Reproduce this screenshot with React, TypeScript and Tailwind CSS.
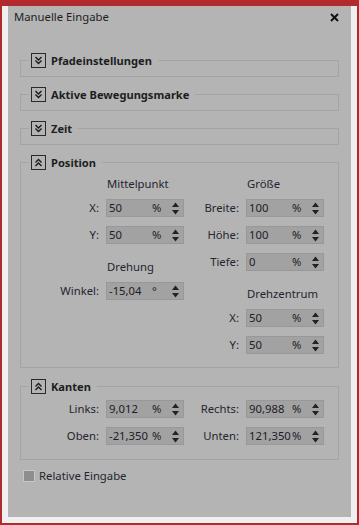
import React from "react"

const font = { fontFamily: '"Noto Sans", "Open Sans", sans-serif' }

function Toggle({ open }: { open: boolean }) {
  return (
    <span className="flex h-[15px] w-[15px] items-center justify-center border border-[#2a2a2a]">
      <svg width="9" height="9" viewBox="0 0 9 9" fill="none" stroke="#1a1a1a" strokeWidth="1.4">
        {open ? (
          <>
            <polyline points="1.5,4.5 4.5,1.5 7.5,4.5" />
            <polyline points="1.5,8 4.5,5 7.5,8" />
          </>
        ) : (
          <>
            <polyline points="1.5,1 4.5,4 7.5,1" />
            <polyline points="1.5,4.5 4.5,7.5 7.5,4.5" />
          </>
        )}
      </svg>
    </span>
  )
}

function Group({ title, open, className, children }: { title: string; open?: boolean; className?: string; children?: React.ReactNode }) {
  return (
    <fieldset className={`mx-[12px] border border-[#a4a4a4] pl-[8px] ${className ?? ""}`}>
      <legend className="pl-[2px] pr-[6px]">
        <span className="flex h-[15px] items-center gap-[5px]">
          <Toggle open={!!open} />
          <span className="text-[11.1px] font-bold leading-none text-[#1e1e1e]">{title}</span>
        </span>
      </legend>
      {children}
    </fieldset>
  )
}

function Spinner() {
  return (
    <svg width="7" height="13" viewBox="0 0 7 13" fill="#222">
      <polygon points="0,5 3.5,0.5 7,5" />
      <polygon points="0,8 7,8 3.5,12.5" />
    </svg>
  )
}

function Field({ label, value, unit, labelW }: { label: string; value: string; unit: string; labelW: string }) {
  return (
    <div className="flex h-[18px] items-center">
      <span className={`${labelW} pr-[7px] text-right text-[11.3px] text-[#25252f]`}>{label}</span>
      <div className="flex h-[18px] w-[78px] items-center border border-[#989898] bg-[#a2a2a2] text-[11.3px] text-[#1c1c28]">
        <span className="ml-[2px] w-[43px] whitespace-nowrap leading-[16px]">{value}</span>
        <span className="w-[20px] leading-[16px]">{unit}</span>
        <Spinner />
      </div>
    </div>
  )
}

function Heading({ text, className }: { text: string; className?: string }) {
  return <div className={`h-[18px] pl-[1px] text-[11.3px] leading-[18px] text-[#25252f] ${className ?? ""}`}>{text}</div>
}

export default function App() {
  return (
    <div className="h-[525px] w-[359px] bg-[#b22a2d] px-[2px] pb-[2px] pt-[6px]" style={font}>
      <div className="h-full bg-[#f0f0f0] px-[6px] pb-[6px]">
        <div className="flex h-full flex-col bg-[#b4b4b4]">
          {/* Title */}
          <div className="flex h-[22px] items-center justify-between pl-[6px] pr-[12px]">
            <span className="text-[11.3px] text-[#1e1e1e]">Manuelle Eingabe</span>
            <svg width="9" height="9" viewBox="0 0 9 9" stroke="#111" strokeWidth="2">
              <line x1="1" y1="1" x2="8" y2="8" />
              <line x1="8" y1="1" x2="1" y2="8" />
            </svg>
          </div>

          <Group title="Pfadeinstellungen" className="mt-[25px] pb-[8px]" />
          <Group title="Aktive Bewegungsmarke" className="mt-[10px] pb-[8px]" />
          <Group title="Zeit" className="mt-[10px] pb-[8px]" />

          <Group title="Position" open className="mt-[10px] pb-[13px] pt-[5px]">
            <div className="flex">
              <div className="flex flex-col">
                <div className="pl-[77px]"><Heading text="Mittelpunkt" /></div>
                <div className="mt-[6px] flex flex-col gap-[9px]">
                  <Field label="X:" value="50" unit="%" labelW="w-[77px]" />
                  <Field label="Y:" value="50" unit="%" labelW="w-[77px]" />
                </div>
                <div className="pl-[77px]"><Heading text="Drehung" className="mt-[14px]" /></div>
                <div className="mt-[6px]">
                  <Field label="Winkel:" value="-15,04" unit="°" labelW="w-[77px]" />
                </div>
              </div>
              <div className="flex flex-col">
                <div className="pl-[62px]"><Heading text="Größe" /></div>
                <div className="mt-[6px] flex flex-col gap-[9px]">
                  <Field label="Breite:" value="100" unit="%" labelW="w-[62px]" />
                  <Field label="Höhe:" value="100" unit="%" labelW="w-[62px]" />
                  <Field label="Tiefe:" value="0" unit="%" labelW="w-[62px]" />
                </div>
                <div className="pl-[62px]"><Heading text="Drehzentrum" className="mt-[14px]" /></div>
                <div className="mt-[6px] flex flex-col gap-[9px]">
                  <Field label="X:" value="50" unit="%" labelW="w-[62px]" />
                  <Field label="Y:" value="50" unit="%" labelW="w-[62px]" />
                </div>
              </div>
            </div>
          </Group>

          <Group title="Kanten" open className="mt-[11px] pb-[14px] pt-[6px]">
            <div className="flex">
              <div className="flex flex-col gap-[9px]">
                <Field label="Links:" value="9,012" unit="%" labelW="w-[77px]" />
                <Field label="Oben:" value="-21,350" unit="%" labelW="w-[77px]" />
              </div>
              <div className="flex flex-col gap-[9px]">
                <Field label="Rechts:" value="90,988" unit="%" labelW="w-[62px]" />
                <Field label="Unten:" value="121,350" unit="%" labelW="w-[62px]" />
              </div>
            </div>
          </Group>

          <div className="ml-[15px] mt-[10px] flex h-[12px] items-center gap-[4px]">
            <span className="h-[12px] w-[12px] border border-[#c6c6c6] bg-[#8e8e8e]" />
            <span className="text-[11.3px] text-[#25252f]">Relative Eingabe</span>
          </div>
        </div>
      </div>
    </div>
  )
}
